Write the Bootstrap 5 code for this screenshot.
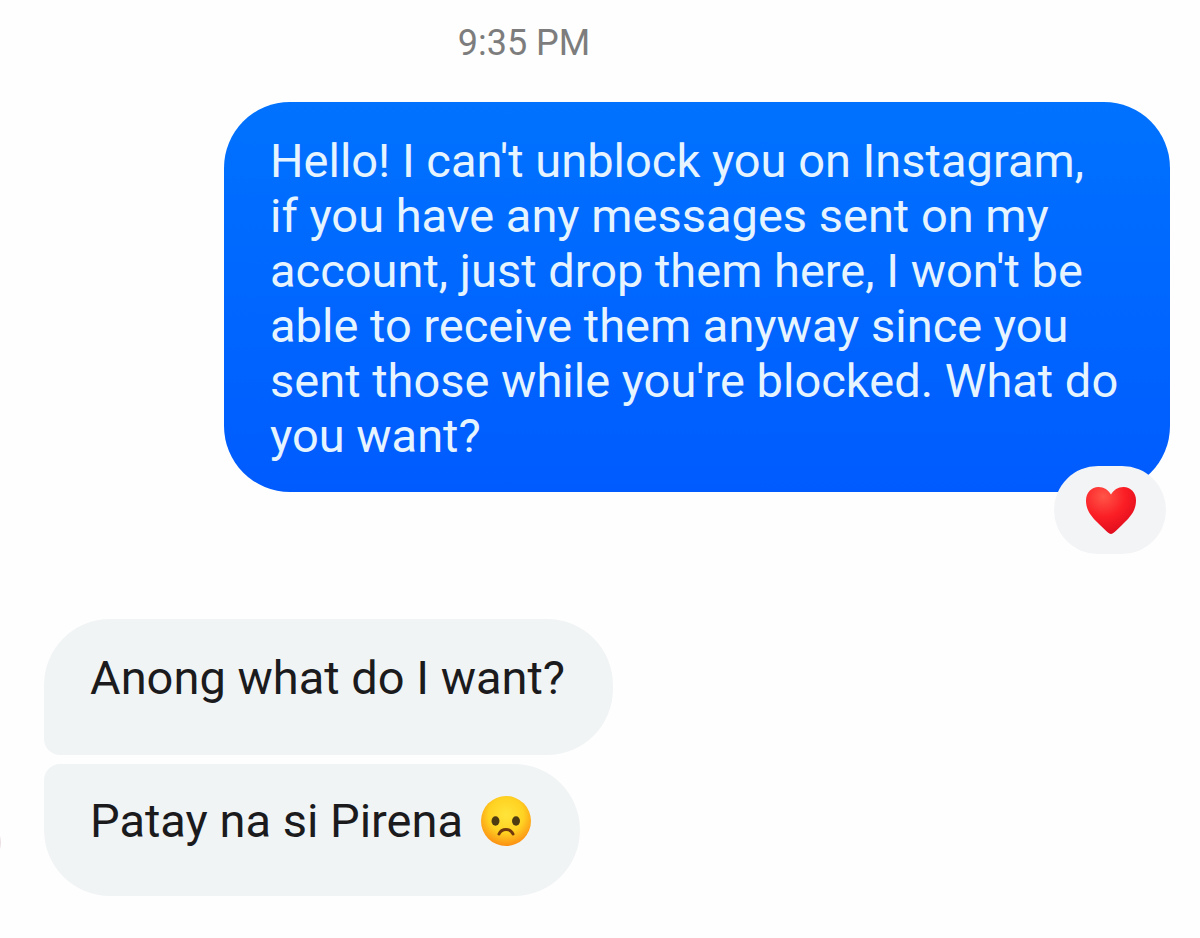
<!DOCTYPE html>
<html lang="en">
<head>
<meta charset="utf-8">
<meta name="viewport" content="width=device-width, initial-scale=1">
<title>Chat</title>
<link href="https://cdn.jsdelivr.net/npm/bootstrap@5.3.0/dist/css/bootstrap.min.css" rel="stylesheet">
<style>
  body { background: #fefefe; font-family: Roboto, "Liberation Sans", sans-serif; overflow-x: hidden; }
  .chat-time { font-size: 36px; line-height: 44px; color: #7d7d7d; padding: 21px 152px 0 0; }
  .thread { padding: 37px 30px 40px 44px; }
  .bubble { font-size: 47px; line-height: 55px; padding: 31px 48px 50px 46px; border-radius: 66px; }
  .bubble-sent { margin-left: 180px; padding: 31px 40px 29px 46px; color: #e6f4ff; background: linear-gradient(#0072ff, #005bff); }
  .bubble-received { color: #1b1b1d; background: #f1f4f5; }
  .bubble-first { border-bottom-left-radius: 16px; }
  .bubble-last { border-top-left-radius: 16px; padding-top: 29px; padding-bottom: 48px; }
  .replies { margin-top: 127px; gap: 9px; }
  .reaction { right: 4px; bottom: -62px; width: 112px; height: 88px; border-radius: 44px; background: #f3f4f6; }
  .face { width: 52px; height: 52px; margin-left: 17px; }
  .avatar-edge { left: -86px; bottom: 32px; width: 43px; height: 43px; background: #eadfe4; }
</style>
</head>
<body>
<main>
  <div class="chat-time text-center"><time datetime="21:35">9:35 PM</time></div>
  <section class="thread">
    <div class="bubble bubble-sent position-relative">
      Hello! I can't unblock you on Instagram,<br>
      if you have any messages sent on my<br>
      account, just drop them here, I won't be<br>
      able to receive them anyway since you<br>
      sent those while you're blocked. What do<br>
      you want?
      <button type="button" class="reaction btn border-0 p-0 position-absolute d-flex align-items-center justify-content-center" aria-label="Heart reaction">
        <svg width="52" height="50" viewBox="0 0 52 50" aria-hidden="true">
          <defs>
            <radialGradient id="heartFill" cx=".35" cy=".2" r=".9">
              <stop offset="0" stop-color="#ff5548"/><stop offset=".5" stop-color="#fa1d24"/><stop offset="1" stop-color="#d9081c"/>
            </radialGradient>
          </defs>
          <path fill="url(#heartFill)" d="M27 49C24.500 49 22 45.500 16 40C7.500 32 2 25.500 2 15.500C2 7.500 7.500 2 14.500 2C20 2 24.500 5 27 9.500C29.500 5 34 2 39.500 2C46.500 2 52 7.500 52 15.500C52 25.500 46.500 32 38 40C32 45.500 29.500 49 27 49Z"/>
        </svg>
      </button>
    </div>
    <div class="replies d-flex flex-column align-items-start position-relative">
      <div class="avatar-edge position-absolute rounded-circle" aria-hidden="true"></div>
      <div class="bubble bubble-received bubble-first">Anong what do I want?</div>
      <div class="bubble bubble-received bubble-last d-flex align-items-center">Patay na si Pirena
        <svg class="face" viewBox="0 0 52 52" role="img" aria-label="Disappointed face">
          <defs>
            <radialGradient id="faceFill" cx=".5" cy=".38" r=".64">
              <stop offset="0" stop-color="#ffe43a"/><stop offset=".55" stop-color="#ffd222"/><stop offset="1" stop-color="#fb8a12"/>
            </radialGradient>
          </defs>
          <circle cx="26" cy="26" r="25" fill="url(#faceFill)"/>
          <ellipse cx="15.500" cy="26" rx="4" ry="4.700" fill="#4d3b12"/>
          <ellipse cx="36" cy="26" rx="4" ry="4.700" fill="#4d3b12"/>
          <path d="M19 39Q21 34.500 26 34.500Q31 34.500 33 39" fill="none" stroke="#70380c" stroke-width="3" stroke-linecap="round"/>
        </svg>
      </div>
    </div>
  </section>
</main>
<script src="https://cdn.jsdelivr.net/npm/bootstrap@5.3.0/dist/js/bootstrap.bundle.min.js"></script>
</body>
</html>
